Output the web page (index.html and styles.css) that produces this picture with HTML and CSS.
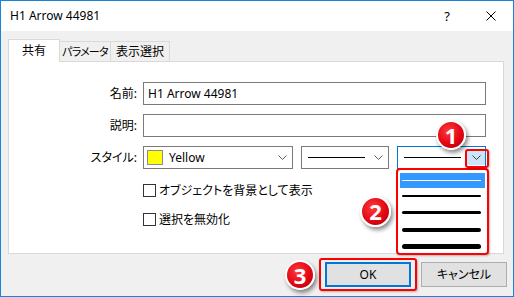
FILE: index.html
```html
<!DOCTYPE html>
<html lang="ja">
  <head>
    <meta charset="UTF-8" />
    <meta name="viewport" content="width=device-width, initial-scale=1.0" />
    <title>H1 Arrow 44981</title>
    <link rel="stylesheet" href="styles.css">
  </head>
  <body>
    <div class="window">
      <div class="titlebar">
        <span class="title">H1 Arrow 44981</span>
        <span class="help">?</span>
        <svg class="close" width="10" height="10" viewBox="0 0 10 10">
          <path d="M0.5 0.5 L9.5 9.5 M9.5 0.5 L0.5 9.5" stroke="#000" stroke-width="1" fill="none" />
        </svg>
      </div>

      <div class="body">
        <div class="tabs">
          <div class="tab active">共有</div>
          <div class="tab kana">パラメータ</div>
          <div class="tab wide">表示選択</div>
        </div>

        <div class="panel">
          <div class="form">
            <div class="label">名前:</div>
            <div class="input">H1 Arrow 44981</div>
            <div class="label">説明:</div>
            <div class="input"></div>
            <div class="label">スタイル:</div>
            <div class="style-row">
              <div class="combo color">
                <span class="swatch"></span>
                <span class="combo-text">Yellow</span>
                <svg class="chevron" width="9" height="5" viewBox="0 0 9 5"><path d="M0.5 0.5 L4.5 4.5 L8.5 0.5" stroke="#606060" fill="none" /></svg>
              </div>
              <div class="combo line">
                <span class="sample"></span>
                <svg class="chevron" width="9" height="5" viewBox="0 0 9 5"><path d="M0.5 0.5 L4.5 4.5 L8.5 0.5" stroke="#606060" fill="none" /></svg>
              </div>
              <div class="combo line focused">
                <span class="sample"></span>
                <span class="drop-btn">
                  <svg width="9" height="5" viewBox="0 0 9 5"><path d="M0.5 0.5 L4.5 4.5 L8.5 0.5" stroke="#404040" fill="none" /></svg>
                </span>
              </div>
            </div>
          </div>

          <div class="checks">
            <div class="check"><span class="box"></span>オブジェクトを背景として表示</div>
            <div class="check"><span class="box"></span>選択を無効化</div>
          </div>
        </div>

        <div class="buttons">
          <button class="btn ok">OK</button>
          <button class="btn">キャンセル</button>
        </div>
      </div>

      <!-- open width list -->
      <div class="dropdown">
        <div class="item selected"><span class="w w1"></span></div>
        <div class="item first"><span class="w w2"></span></div>
        <div class="item"><span class="w w3"></span></div>
        <div class="item"><span class="w w4"></span></div>
        <div class="item"><span class="w w5"></span></div>
      </div>

      <!-- annotations -->
      <div class="mark mark-btn"></div>
      <div class="mark mark-ok"></div>
      <div class="badge badge-1">1</div>
      <div class="badge badge-2">2</div>
      <div class="badge badge-3">3</div>
    </div>
  </body>
</html>
```

FILE: styles.css
```css
body {
  margin: 0;
  font-family: "Noto Sans", "Noto Sans CJK JP", sans-serif;
  font-size: 12px;
  line-height: 16px;
  font-feature-settings: "palt";
  color: #000;
}

.window {
  position: relative;
  width: 514px;
  height: 297px;
  box-sizing: border-box;
  border: 1px solid #1883d7;
  background: #f0f0f0;
  display: flex;
  flex-direction: column;
}

.titlebar {
  height: 30px;
  background: #fff;
  display: flex;
  align-items: center;
  padding: 0 17px 0 9px;
}

.title {
  flex: 1;
}

.help {
  font-size: 13px;
  margin-right: 36px;
}

.body {
  flex: 1;
  padding: 8px 6px 0 7px;
}

.tabs {
  display: flex;
  align-items: flex-end;
  height: 22px;
}

.tab {
  flex-shrink: 0;
  height: 20px;
  box-sizing: border-box;
  border: 1px solid #d9d9d9;
  border-bottom: none;
  border-left: none;
  display: flex;
  align-items: center;
  justify-content: center;
  width: 51px;
  white-space: nowrap;
  overflow: hidden;
}

.tab.kana {
  font-size: 11px;
  letter-spacing: -0.8px;
}

.tab.wide {
  width: 59px;
}

.tab.active {
  position: relative;
  z-index: 1;
  height: 23px;
  width: 52px;
  margin-bottom: -1px;
  border-left: 1px solid #d9d9d9;
  background: #fff;
}

.panel {
  height: 193px;
  box-sizing: border-box;
  margin-right: 3px;
  background: #fff;
  border: 1px solid #d9d9d9;
  padding: 20px 19px 0 0;
}

.form {
  display: grid;
  grid-template-columns: 128px 1fr;
  column-gap: 6px;
  row-gap: 9px;
}

.label {
  display: flex;
  align-items: center;
  justify-content: flex-end;
  white-space: nowrap;
}

.input {
  height: 23px;
  box-sizing: border-box;
  border: 1px solid #7a7a7a;
  padding: 0 4px;
  display: flex;
  align-items: center;
}

.style-row {
  display: flex;
  gap: 8px;
}

.combo {
  height: 23px;
  box-sizing: border-box;
  border: 1px solid #7a7a7a;
  display: flex;
  align-items: center;
}

.combo.color {
  width: 150px;
  padding: 0 5px 0 3px;
}

.combo.line {
  width: 88px;
  padding: 0 5px 0 6px;
}

.combo.focused {
  width: 89px;
  border-color: #0078d7;
  padding-right: 0;
}

.swatch {
  width: 16px;
  height: 15px;
  box-sizing: border-box;
  border: 1px solid #8c8c8c;
  background: #ffff00;
}

.combo-text {
  flex: 1;
  margin-left: 6px;
}

.sample {
  width: 57px;
  height: 1px;
  background: #000;
  margin-right: auto;
}

.drop-btn {
  width: 18px;
  height: 15px;
  background: #cce4f7;
  display: flex;
  align-items: center;
  justify-content: center;
}

.checks {
  display: flex;
  flex-direction: column;
  gap: 16px;
  padding: 15px 0 0 134px;
}

.check {
  height: 13px;
  display: flex;
  align-items: center;
  gap: 3px;
  white-space: nowrap;
}

.box {
  width: 13px;
  height: 13px;
  box-sizing: border-box;
  border: 1px solid #333;
  background: #fff;
}

.buttons {
  display: flex;
  justify-content: flex-end;
  gap: 10px;
  margin-top: 8px;
}

.btn {
  width: 86px;
  height: 25px;
  box-sizing: border-box;
  background: #e1e1e1;
  border: 1px solid #adadad;
  font: inherit;
  padding: 0;
}

.btn.ok {
  border: 2px solid #0078d7;
}

.dropdown {
  position: absolute;
  left: 395px;
  top: 167px;
  width: 93px;
  height: 87px;
  box-sizing: border-box;
  border: 2px solid #ff0000;
  border-radius: 4px;
  background: #fff;
  padding: 3px 2px 0;
  overflow: hidden;
  box-shadow: 1px 1px 2px rgba(0, 0, 0, 0.25);
}

.item {
  height: 17px;
  display: flex;
  align-items: center;
  padding: 0 4px 0 2px;
}

.item.selected {
  height: 15px;
  background: #3399ff;
}

.item.first {
  height: 16px;
}

.w {
  flex: 1;
  background: #000;
  border-radius: 3px;
}

.w1 {
  height: 1px;
  background: #fff;
}

.w2 {
  height: 2px;
}

.w3 {
  height: 3px;
}

.w4 {
  height: 4px;
}

.w5 {
  height: 5px;
}

.mark {
  position: absolute;
  box-sizing: border-box;
  border: 2px solid #ff0000;
  border-radius: 3px;
  box-shadow: 1px 1px 2px rgba(0, 0, 0, 0.25);
}

.mark-btn {
  left: 464px;
  top: 148px;
  width: 24px;
  height: 19px;
}

.mark-ok {
  left: 318px;
  top: 257px;
  width: 98px;
  height: 33px;
}

.badge {
  position: absolute;
  width: 30px;
  height: 30px;
  box-sizing: border-box;
  border: 2px solid #fff;
  border-radius: 50%;
  background: radial-gradient(circle at 40% 35%, #ff3b3b, #e30613 55%, #a8000b);
  box-shadow: 2px 3px 4px rgba(0, 0, 0, 0.45);
  color: #fff;
  font-family: "Noto Sans", sans-serif;
  font-weight: bold;
  font-size: 22px;
  line-height: 26px;
  text-align: center;
}

.badge-1 {
  left: 435px;
  top: 119px;
}

.badge-2 {
  left: 359px;
  top: 195px;
  width: 31px;
  height: 31px;
  line-height: 27px;
}

.badge-3 {
  left: 284px;
  top: 259px;
}
```
